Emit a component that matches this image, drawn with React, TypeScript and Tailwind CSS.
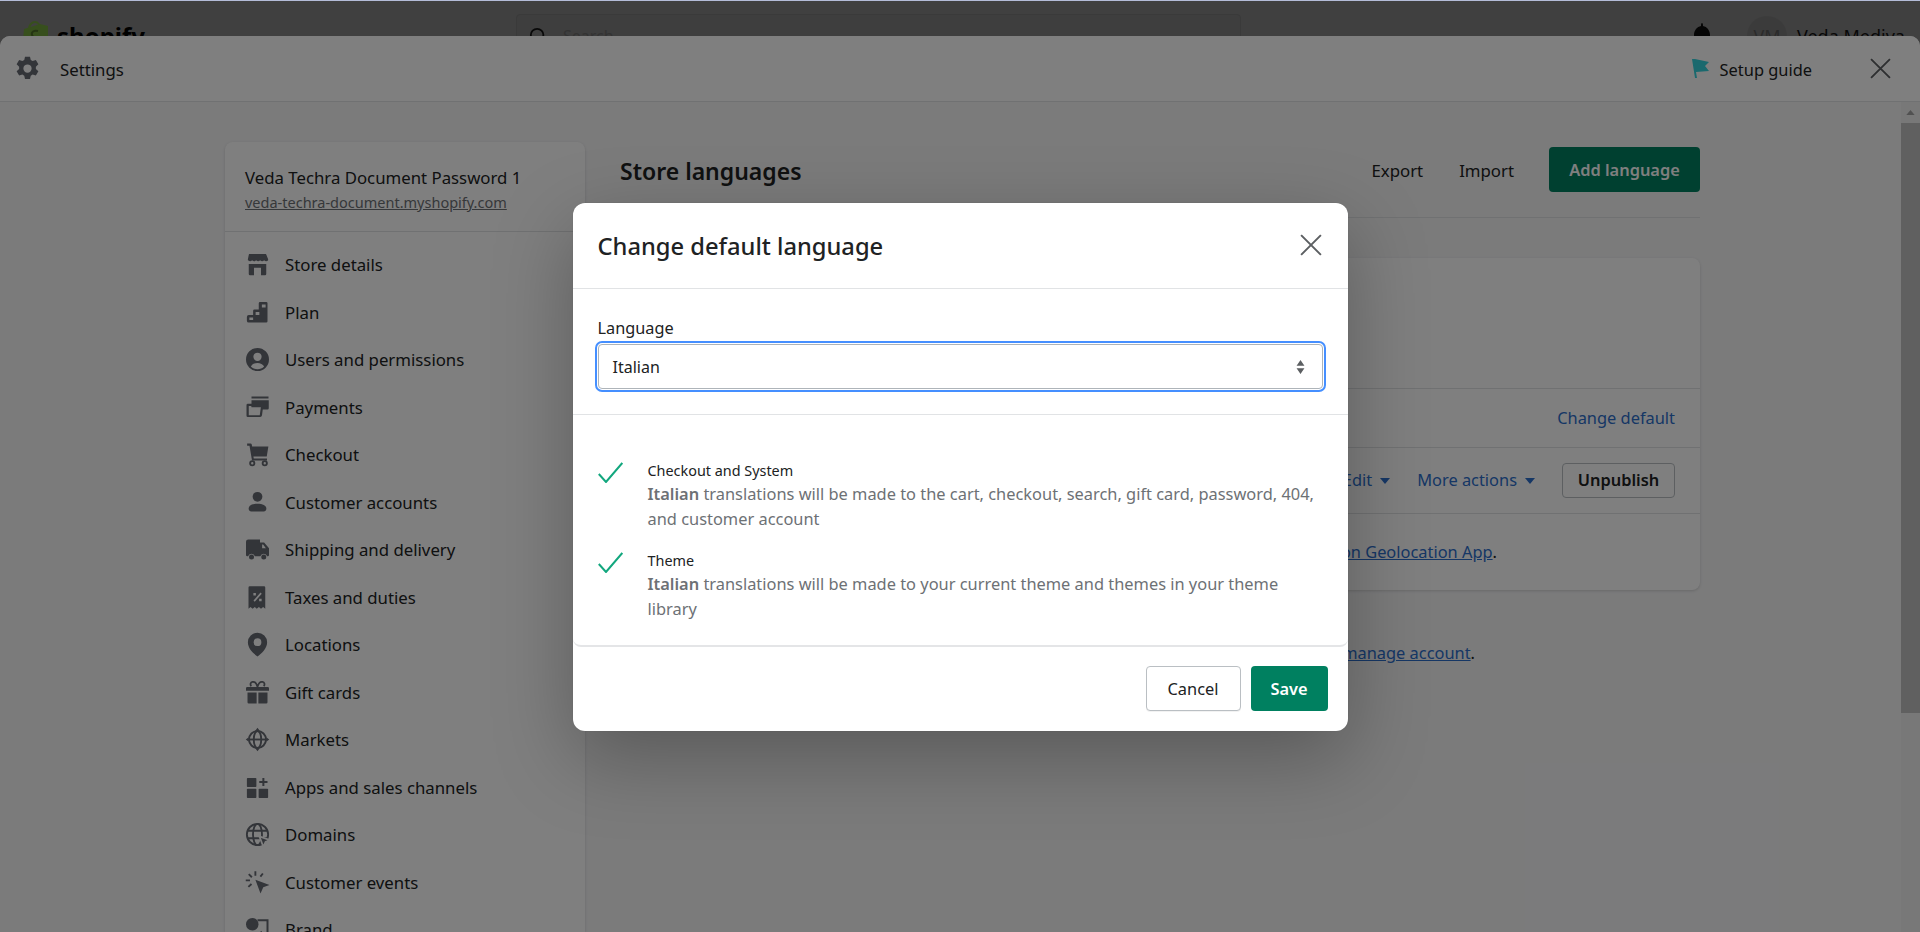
import type { ReactNode } from 'react';

type NavItem = { label: string; icon: ReactNode };

const Store = (
  <path
    fillRule="evenodd"
    d="M3.2 1.5h13.600l1.700 4.300v.8c-.8 1.100-2.400 1.100-3.200 0-.9 1.100-2.300 1.100-3.200 0-.9 1.100-2.300 1.100-3.200 0-.9 1.100-2.300 1.100-3.200 0-.9 1.100-2.300 1.100-3.200 0-.2 0-.2 0-.2-.1v-.7zM3 9.600h14v7.900a1 1 0 0 1-1 1h-3.200v-6H7.200v6H4a1 1 0 0 1-1-1z"
  />
);
const Plan = (
  <path
    fillRule="evenodd"
    d="M12 1.500h5a1 1 0 0 1 1 1V17a1 1 0 0 1-1 1H3a1.500 1.500 0 0 1-1.500-1.500v-3A1.500 1.500 0 0 1 3 12h3.500V8.500a1 1 0 0 1 1-1H11V2.500a1 1 0 0 1 1-1zM13.500 3.500v2.500h3V3.500zM8.500 9.500v2.500h3V9.500zM3.500 14v2h3v-2z"
  />
);
const Users = (
  <path
    fillRule="evenodd"
    d="M10 .8a9.200 9.200 0 1 0 0 18.400A9.200 9.200 0 0 0 10 .8zM10 4.500a3.300 3.300 0 1 1 0 6.600 3.300 3.300 0 0 1 0-6.600zM4.700 15.600c1-2 3-2.900 5.300-2.900s4.300.9 5.300 2.900c-1.400 1.400-3.200 2.100-5.300 2.100s-3.900-.7-5.300-2.100z"
  />
);
const Payments = (
  <path
    fillRule="evenodd"
    d="M5.200 1.200H18.800v1.500H5.200zM5.200 4.200H19v6.300a1 1 0 0 1-1 1h-3.800l-.6 4.700a1.500 1.500 0 0 1-1.500 1.300H2.200a1 1 0 0 1-1-1V8a1 1 0 0 1 1-1h3zM3 8.800v7.300h8.800l.9-6.400H5.200l-.2-.9z"
  />
);
const Cart = (
  <>
    <path d="M1.700 1.200h2.700a1 1 0 0 1 1 .8l.3 1.600h13l-1.300 8H6.700l.3 1.600h10.600v1.600H5.600L3.600 3H1.700z" />
    <circle cx="5.800" cy="17" r="1.700" fill="none" stroke="currentColor" strokeWidth="1.500" />
    <circle cx="15.800" cy="17" r="1.700" fill="none" stroke="currentColor" strokeWidth="1.500" />
  </>
);
const Customer = (
  <>
    <circle cx="10" cy="5.400" r="3.900" />
    <path d="M2.900 15c0-2.900 3.100-4.100 7.100-4.100s7.100 1.200 7.100 4.100c0 1.300-1 2.100-2.100 2.100H5c-1.100 0-2.100-.8-2.100-2.100z" />
  </>
);
const Truck = (
  <>
    <path
      fillRule="evenodd"
      d="M.8 3.800A1.800 1.800 0 0 1 2.600 2H12v2.300h3.300l3.900 4.700v5.400a1 1 0 0 1-1 1h-.5a2.800 2.800 0 0 0-5.400 0H7.900a2.800 2.800 0 0 0-5.400 0H1.800a1 1 0 0 1-1-1zM13.700 6v3h3l-2.200-3z"
    />
    <circle cx="5.200" cy="16" r="2" />
    <circle cx="15" cy="16" r="2" />
  </>
);
const Taxes = (
  <path
    fillRule="evenodd"
    d="M3.800 1h11.400a1 1 0 0 1 1 1v17l-1.700-1.500-1.700 1.400-1.700-1.400-1.700 1.400-1.600-1.400-1.700 1.400-1.700-1.400L2.800 19V2a1 1 0 0 1 1-1zM12.400 6l-5.600 6.400 1 .9 5.600-6.400zM6.700 6.400v2h2v-2zM11.300 10.900v2h2v-2z"
  />
);
const Pin = (
  <path
    fillRule="evenodd"
    d="M10 .5a7.700 7.700 0 0 0-7.700 7.700c0 4.800 4.200 9 7.700 11.300 3.500-2.300 7.700-6.500 7.700-11.300A7.700 7.700 0 0 0 10 .5zM10 5a3.100 3.100 0 1 1 0 6.200A3.100 3.100 0 0 1 10 5z"
  />
);
const Gift = (
  <>
    <path d="M1.800 5.500h16.400a1 1 0 0 1 1 1v2.100H.8V6.500a1 1 0 0 1 1-1zM2 10h7.300v8.700H3a1 1 0 0 1-1-1zM10.700 10H18v7.700a1 1 0 0 1-1 1h-6.300z" />
    <path
      d="M10 5.500C9.300 2.800 7.600 1.200 6 1.500 4.400 1.800 3.900 3.700 5 5M10 5.500c.7-2.700 2.400-4.300 4-4 1.600.3 2.100 2.200 1 3.500"
      fill="none"
      stroke="currentColor"
      strokeWidth="1.400"
    />
  </>
);
const Markets = (
  <g fill="none" stroke="currentColor" strokeWidth="1.500">
    <circle cx="10" cy="10" r="6.800" />
    <ellipse cx="10" cy="10" rx="3" ry="6.800" />
    <path d="M3.200 10h13.600" />
    <path d="M10 .6 11.800 3H8.200zM10 19.400 11.800 17H8.200zM.6 10 3 8.200v3.600zM19.400 10 17 8.200v3.600z" fill="currentColor" stroke="none" />
  </g>
);
const Apps = (
  <>
    <rect x="1.500" y="2.300" width="7.600" height="7.300" rx=".6" />
    <rect x="1.500" y="11" width="7.600" height="7.300" rx=".6" />
    <rect x="10.900" y="11" width="7.600" height="7.300" rx=".6" />
    <path d="M14.700 2.300v6.500M11.400 5.600h6.600" fill="none" stroke="currentColor" strokeWidth="1.600" />
  </>
);
const Domains = (
  <>
    <g fill="none" stroke="currentColor" strokeWidth="1.500">
      <circle cx="10" cy="10" r="8.500" />
      <ellipse cx="10" cy="10" rx="3.600" ry="8.500" />
      <path d="M2 7h16M2 13h16" />
    </g>
    <path d="M11.500 11.500 20 14.500l-3.600 1.500-1.700 3.800z" stroke="#fff" strokeWidth="1.400" />
  </>
);
const Events = (
  <>
    <path d="M8.300 7.800 19.600 12l-5 1.800-2.200 5z" />
    <path
      d="M8.300 1v3.600M3 3.300 5.500 5.800M14.300 2.800 12.300 5.300M.6 8.300H4M2.700 13.500l2.500-2.300"
      fill="none"
      stroke="currentColor"
      strokeWidth="1.500"
    />
  </>
);
const Brand = (
  <>
    <circle cx="5.800" cy="5.800" r="5" />
    <path d="M10 2.500h8v15H4V12" fill="none" stroke="currentColor" strokeWidth="1.600" />
    <path d="M8 17l5-6 4 6z" />
  </>
);

const navItems: NavItem[] = [
  { label: 'Store details', icon: Store },
  { label: 'Plan', icon: Plan },
  { label: 'Users and permissions', icon: Users },
  { label: 'Payments', icon: Payments },
  { label: 'Checkout', icon: Cart },
  { label: 'Customer accounts', icon: Customer },
  { label: 'Shipping and delivery', icon: Truck },
  { label: 'Taxes and duties', icon: Taxes },
  { label: 'Locations', icon: Pin },
  { label: 'Gift cards', icon: Gift },
  { label: 'Markets', icon: Markets },
  { label: 'Apps and sales channels', icon: Apps },
  { label: 'Domains', icon: Domains },
  { label: 'Customer events', icon: Events },
  { label: 'Brand', icon: Brand },
];

const checks = [
  {
    title: 'Checkout and System',
    text: 'translations will be made to the cart, checkout, search, gift card, password, 404, and customer account',
  },
  {
    title: 'Theme',
    text: 'translations will be made to your current theme and themes in your theme library',
  },
];

function Caret() {
  return (
    <svg viewBox="0 0 10 6" className="h-[6px] w-[10px] fill-[#2c6ecb]">
      <path d="M0 0h10L5 6z" />
    </svg>
  );
}

function CloseIcon({ className }: { className: string }) {
  return (
    <svg viewBox="0 0 20 20" className={className} fill="none" stroke="currentColor" strokeWidth="1.800">
      <path d="M1 1l18 18M19 1 1 19" />
    </svg>
  );
}

function TopBar() {
  return (
    <header className="flex h-[72px] items-center bg-[#808080] pl-[22px] text-[#000]">
      <div className="flex w-[494px] shrink-0 items-center">
        <svg viewBox="0 0 26 30" className="h-[30px] w-[26px]">
          <path d="M2 8 18 3l8 2v25H0z" className="fill-[#6f9e3a]" />
          <path d="M7 8c0-4 3-7 6-7s5 3 5 7" fill="none" stroke="#6f9e3a" strokeWidth="2" />
          <path d="M16 10c-4-1-7 1-6 4s5 3 4 6" fill="none" stroke="#4a6a26" strokeWidth="2" />
        </svg>
        <span className="ml-[9px] text-[24px] font-bold">shopify</span>
      </div>
      <div className="flex h-[45px] w-[725px] shrink-0 items-center gap-[16px] rounded-[4px] border border-[#747474] bg-[#7c7c7c] pl-[12px] text-[#111]">
        <svg viewBox="0 0 20 20" className="h-[18px] w-[18px]" fill="none" stroke="currentColor" strokeWidth="2">
          <circle cx="9" cy="9" r="7" />
          <path d="M14 14l5 5" />
        </svg>
        <span className="text-[16px] text-[#666]">Search</span>
      </div>
      <svg viewBox="0 0 16 26" className="ml-[453px] h-[26px] w-[16px] shrink-0 fill-[#0a0a0a]">
        <path d="M8 0c.7 0 1 .8 1 3 4 .8 7 4.500 7 9v9H0v-9c0-4.500 3-8.200 7-9 0-2.200.3-3 1-3z" />
      </svg>
      <div className="ml-[37px] flex h-[40px] w-[40px] shrink-0 items-center justify-center rounded-full bg-[#777] text-[18px] text-[#555]">
        VM
      </div>
      <span className="ml-[10px] whitespace-nowrap text-[18px] text-[#111]">Veda Mediya</span>
    </header>
  );
}

function Sidebar() {
  return (
    <aside className="w-[360px] shrink-0 rounded-t-[8px] bg-white shadow-[0_1px_3px_rgba(0,0,0,0.15)]">
      <div className="flex h-[90px] flex-col justify-center border-b border-[#e1e3e5] px-[20px] pt-[6px]">
        <p className="text-[16.8px] leading-[24px] text-[#202223]">Veda Techra Document Password 1</p>
        <a className="text-[14.5px] leading-[24px] text-[#6d7175] underline">veda-techra-document.myshopify.com</a>
      </div>
      <nav className="pt-[9px]">
        {navItems.map((item) => (
          <div key={item.label} className="flex h-[47.5px] items-center gap-[15px] pl-[20px]">
            <svg viewBox="0 0 20 20" className="h-[25px] w-[25px] shrink-0 fill-current text-[#666a73]">
              {item.icon}
            </svg>
            <span className="text-[16.8px] text-[#202223]">{item.label}</span>
          </div>
        ))}
      </nav>
    </aside>
  );
}

function Languages() {
  return (
    <section className="w-[1080px] shrink-0">
      <div className="flex h-[76px] items-start justify-between border-b border-[#e1e3e5] pt-[5px]">
        <h1 className="pt-[4px] text-[23px] font-semibold leading-[40px] text-[#202223]">Store languages</h1>
        <div className="flex items-center text-[16.8px] text-[#202223]">
          <span className="pt-[2px]">Export</span>
          <span className="ml-[36px] pt-[2px]">Import</span>
          <button className="ml-[35px] h-[45px] w-[151px] rounded-[4px] bg-[#008060] pt-[2px] text-[16.4px] font-semibold text-white">
            Add language
          </button>
        </div>
      </div>
      <div className="mt-[40px] rounded-[8px] bg-white text-[16.4px] shadow-[0_1px_3px_rgba(0,0,0,0.15)]">
        <div className="h-[131px] border-b border-[#e1e3e5]" />
        <div className="flex h-[59px] items-center justify-end border-b border-[#e1e3e5] pr-[25px] text-[#2c6ecb]">
          Change default
        </div>
        <div className="flex h-[66px] items-center justify-end border-b border-[#e1e3e5] pr-[25px]">
          <span className="text-[#2c6ecb]">Edit</span>
          <span className="ml-[8px]">
            <Caret />
          </span>
          <span className="ml-[27px] text-[#2c6ecb]">More actions</span>
          <span className="ml-[8px]">
            <Caret />
          </span>
          <button className="ml-[27px] h-[35px] w-[113px] rounded-[4px] border border-[#babfc3] font-semibold text-[#202223]">
            Unpublish
          </button>
        </div>
        <div className="flex h-[76px] items-center justify-end pr-[203px] text-[#202223]">
          <span>
            <a className="text-[#2c6ecb] underline">Translation Geolocation App</a>.
          </span>
        </div>
      </div>
      <p className="mt-[51px] pr-[225px] text-right text-[16.4px] text-[#202223]">
        <a className="text-[#2c6ecb] underline">manage account</a>.
      </p>
    </section>
  );
}

function Scrollbar() {
  return (
    <div className="absolute right-0 top-0 bottom-0 w-[19px] bg-[#f1f1f1]">
      <svg viewBox="0 0 10 6" className="mx-auto mt-[8px] h-[5px] w-[9px] fill-[#a3a3a3]">
        <path d="M5 0l5 6H0z" />
      </svg>
      <div className="mt-[8px] h-[590px] bg-[#c1c1c1]" />
    </div>
  );
}

function Modal() {
  return (
    <div className="flex h-[528px] w-[775px] flex-col rounded-[12px] bg-white shadow-[0_26px_80px_rgba(0,0,0,0.28),0_0_1px_rgba(0,0,0,0.2)]">
      <div className="flex h-[86px] shrink-0 items-center justify-between border-b border-[#e1e3e5] pl-[25px] pr-[26px]">
        <h2 className="pt-[4px] text-[23.7px] font-medium text-[#202223]">Change default language</h2>
        <CloseIcon className="h-[22px] w-[22px] text-[#5c5f62]" />
      </div>
      <div className="h-[126px] shrink-0 border-b border-[#e1e3e5] px-[25px] pt-[24px]">
        <label className="block pb-px text-[16.3px] leading-[30px] text-[#202223]">Language</label>
        <div className="flex h-[45px] items-center justify-between rounded-[4px] border border-[#aeb4b9] pl-[14px] pr-[17px] pt-[2px] text-[16px] text-[#202223] outline-2 outline-offset-[1px] outline-[#458fff]">
          <span>Italian</span>
          <svg viewBox="0 0 10 16" className="h-[14px] w-[9px] fill-[#5c5f62]">
            <path d="M5 0l4.500 6.500H.5zM5 16 .5 9.500h9z" />
          </svg>
        </div>
      </div>
      <div className="flex flex-1 flex-col gap-[20px] rounded-b-[8px] border-b-2 border-[#e4e5e7] px-[25px] pt-[46px]">
        {checks.map((row) => (
          <div key={row.title} className="flex">
            <svg viewBox="0 0 25 21" className="mt-[1px] h-[21px] w-[25px] shrink-0" fill="none" stroke="#12a77e" strokeWidth="2">
              <path d="M.8 12 8 20 24.300 1" />
            </svg>
            <div className="ml-[25px] w-[668px]">
              <p className="text-[14.4px] leading-[20px] text-[#202223]">{row.title}</p>
              <p className="text-[16.4px] leading-[25px] text-[#6d7175]">
                <strong className="font-semibold">Italian</strong> {row.text}
              </p>
            </div>
          </div>
        ))}
      </div>
      <div className="flex h-[84px] shrink-0 items-center justify-end gap-[10px] pr-[20px] text-[16.4px]">
        <button className="h-[45px] w-[95px] rounded-[4px] border border-[#babfc3] bg-white pt-[2px] text-[#202223] shadow-[0_1px_0_rgba(0,0,0,0.05)]">
          Cancel
        </button>
        <button className="h-[45px] w-[77px] rounded-[4px] bg-[#008060] pt-[2px] font-semibold text-white">Save</button>
      </div>
    </div>
  );
}

export default function App() {
  return (
    <div className="relative h-screen overflow-hidden bg-[#808080] font-['Noto_Sans',sans-serif]">
      <TopBar />
      {/* settings window sits over the admin top bar */}
      <div className="absolute inset-x-0 bottom-0 top-[36px] flex flex-col overflow-hidden rounded-t-[10px] bg-[#f6f6f7]">
        <div className="flex h-[66px] shrink-0 items-center border-b border-[#e1e3e5] bg-white pl-[15px] pr-[29px]">
          <svg viewBox="0 0 20 20" className="h-[25px] w-[25px] fill-[#666a73]">
            <path
              fillRule="evenodd"
              d="M8 .5h4l.6 2.700 1.500.8 2.600-.8 2 3.400-2 1.900v1.800l2 1.900-2 3.400-2.600-.8-1.500.9-.6 2.700H8l-.6-2.700-1.500-.9-2.600.8-2-3.400 2-1.900V8.500l-2-1.900 2-3.400 2.600.8 1.500-.8zM10 6.700a3.300 3.300 0 1 0 0 6.600 3.300 3.300 0 0 0 0-6.600z"
            />
          </svg>
          <span className="ml-[20px] pt-[2px] text-[16.8px] text-[#202223]">Settings</span>
          <svg viewBox="0 0 18 20" className="ml-auto h-[20px] w-[18px]">
            <path d="M0 0h3l14 3-4 4 4 5-13 1 1 6H3z" className="fill-[#34d2dc]" />
          </svg>
          <span className="ml-[10px] pt-[3px] text-[16.4px] text-[#202223]">Setup guide</span>
          <CloseIcon className="ml-[58px] h-[21px] w-[21px] text-[#5c5f62]" />
        </div>
        <div className="relative flex min-h-0 flex-1 gap-[35px] overflow-hidden pl-[225px] pt-[40px]">
          <Sidebar />
          <Languages />
          <Scrollbar />
        </div>
      </div>
      <div className="absolute inset-x-0 bottom-0 top-px flex items-center justify-center bg-black/50">
        <Modal />
      </div>
      <div className="absolute inset-x-0 top-0 h-px bg-[#b4bcd8]" />
    </div>
  );
}
